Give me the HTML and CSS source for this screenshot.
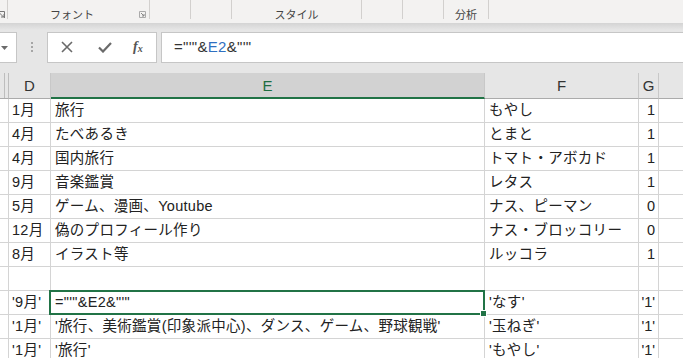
FILE: index.html
```html
<!DOCTYPE html>
<html lang="ja">
<head>
  <meta charset="UTF-8" />
  <title>Book1 - Excel</title>
  <link rel="stylesheet" href="styles.css">
</head>
<body>
  <!-- Ribbon group labels -->
  <div class="ribbon">
    <div class="group g-edge">
      <svg class="launcher edge" width="7" height="7" viewBox="0 0 7 7"><path d="M0 0.5h6.5v6.5M1.5 2l4 4M3 6h3V3" fill="none" stroke="#777" stroke-width="1"/></svg>
    </div>
    <div class="group g-font">
      <span>フォント</span>
      <svg class="launcher" width="7" height="7" viewBox="0 0 7 7"><path d="M0.5 6.5V0.5h6v6z" fill="none" stroke="#aaa" stroke-width="1"/><path d="M2 2l3 3M5 3v2H3" fill="none" stroke="#888" stroke-width="1"/></svg>
    </div>
    <div class="group w41"></div>
    <div class="group w41"></div>
    <div class="group g-style"><span>スタイル</span></div>
    <div class="group w41"></div>
    <div class="group w41"></div>
    <div class="group g-anal"><span>分析</span></div>
    <div class="group g-rest"></div>
  </div>
  <div class="ribbon-shadow"></div>

  <!-- Formula bar -->
  <div class="formula-bar">
    <div class="name-box">
      <svg width="7" height="4" viewBox="0 0 7 4"><path d="M0 0h7L3.5 4z" fill="#6b6b6b"/></svg>
    </div>
    <div class="grip"><i></i><i></i><i></i></div>
    <div class="fx-buttons">
      <svg width="12" height="12" viewBox="0 0 12 12"><path d="M1 1l10 10M11 1L1 11" stroke="#6a6a6a" stroke-width="1.6" fill="none"/></svg>
      <svg width="14" height="12" viewBox="0 0 14 12"><path d="M1 6.5l4 4L13 2" stroke="#6a6a6a" stroke-width="2.2" fill="none"/></svg>
      <span class="fx">f<sub>x</sub></span>
    </div>
    <div class="fx-input">="'"&amp;<span class="ref">E2</span>&amp;"'"</div>
  </div>

  <!-- Sheet -->
  <div class="sheet">
    <div class="hdr corner"></div>
    <div class="hdr">D</div>
    <div class="hdr sel">E</div>
    <div class="hdr">F</div>
    <div class="hdr">G</div>
    <div class="hdr last"></div>

    <div class="c"></div><div class="c">1月</div><div class="c">旅行</div><div class="c">もやし</div><div class="c num">1</div><div class="c last"></div>
    <div class="c"></div><div class="c">4月</div><div class="c">たべあるき</div><div class="c">とまと</div><div class="c num">1</div><div class="c last"></div>
    <div class="c"></div><div class="c">4月</div><div class="c">国内旅行</div><div class="c">トマト・アボカド</div><div class="c num">1</div><div class="c last"></div>
    <div class="c"></div><div class="c">9月</div><div class="c">音楽鑑賞</div><div class="c">レタス</div><div class="c num">1</div><div class="c last"></div>
    <div class="c"></div><div class="c">5月</div><div class="c">ゲーム、漫画、Youtube</div><div class="c">ナス、ピーマン</div><div class="c num">0</div><div class="c last"></div>
    <div class="c"></div><div class="c">12月</div><div class="c">偽のプロフィール作り</div><div class="c">ナス・ブロッコリー</div><div class="c num">0</div><div class="c last"></div>
    <div class="c"></div><div class="c">8月</div><div class="c">イラスト等</div><div class="c">ルッコラ</div><div class="c num">1</div><div class="c last"></div>
    <div class="c"></div><div class="c"></div><div class="c"></div><div class="c"></div><div class="c"></div><div class="c last"></div>
    <div class="c"></div><div class="c">'9月'</div><div class="c active">="'"&amp;E2&amp;"'"</div><div class="c">'なす'</div><div class="c num">'1'</div><div class="c last"></div>
    <div class="c"></div><div class="c">'1月'</div><div class="c">'旅行、美術鑑賞(印象派中心)、ダンス、ゲーム、野球観戦'</div><div class="c">'玉ねぎ'</div><div class="c num">'1'</div><div class="c last"></div>
    <div class="c"></div><div class="c">'1月'</div><div class="c">'旅行'</div><div class="c">'もやし'</div><div class="c num">'1'</div><div class="c last"></div>
  </div>
</body>
</html>
```

FILE: styles.css
```css
* {
  margin: 0;
  padding: 0;
  box-sizing: border-box;
}
html, body {
  width: 683px;
  height: 358px;
  overflow: hidden;
}
body {
  background: #e6e6e6;
  font-family: "Liberation Sans", "Noto Sans CJK JP", sans-serif;
  color: #222;
}
/* Ribbon */
.ribbon {
  display: flex;
  height: 23px;
  background: #f3f2f1;
}
.group {
  position: relative;
  height: 19px;
  border-right: 1px solid #d2d0ce;
  display: flex;
  align-items: flex-end;
  justify-content: center;
  font-size: 11px;
  color: #444;
  line-height: 13px;
  flex-shrink: 0;
}
.group span {
  margin-bottom: -3px;
}
.g-edge { width: 8px; }
.g-font { width: 142px; padding-right: 13px; }
.w41 { width: 41px; }
.g-style { width: 130px; }
.g-anal { width: 45px; }
.g-rest { flex: 1; border-right: none; }
.launcher {
  position: absolute;
  right: 3px;
  bottom: 1px;
}
.launcher.edge {
  right: 2px;
  bottom: 1px;
}
.ribbon-shadow {
  height: 7px;
  background: linear-gradient(#d4d4d4, #e6e6e6);
}
/* Formula bar */
.formula-bar {
  display: flex;
  align-items: center;
  height: 43px;
  padding-bottom: 9px;
}
.name-box {
  width: 17px;
  height: 31px;
  background: #fff;
  border: 1px solid #c6c6c6;
  border-left: none;
  display: flex;
  align-items: center;
  padding-left: 1px;
  padding-top: 2px;
}
.grip {
  width: 30px;
  display: flex;
  flex-direction: column;
  align-items: center;
  gap: 2px;
}
.grip i {
  width: 2px;
  height: 2px;
  background: #a6a6a6;
}
.fx-buttons {
  width: 110px;
  height: 31px;
  background: #fff;
  border: 1px solid #c6c6c6;
  display: flex;
  align-items: center;
  padding-left: 13px;
}
.fx-buttons svg:first-child { margin-right: 25px; }
.fx-buttons svg:nth-child(2) { margin-right: 21px; }
.fx {
  font-family: "Liberation Serif", serif;
  font-style: italic;
  font-weight: bold;
  font-size: 14px;
  color: #555;
}
.fx sub {
  font-size: 10px;
  vertical-align: -1px;
}
.fx-input {
  flex: 1;
  margin-left: 4px;
  height: 31px;
  background: #fff;
  border: 1px solid #c6c6c6;
  border-right: none;
  padding-left: 12px;
  font-size: 15px;
  letter-spacing: 0.3px;
  line-height: 28px;
  color: #333;
}
.fx-input .ref { color: #2f6fc0; }
/* Sheet grid */
.sheet {
  display: grid;
  grid-template-columns: 9px 42px 434px 154px 20px 1fr;
  grid-template-rows: 26px;
  grid-auto-rows: 24px;
}
.hdr {
  background: #e6e6e6;
  border-right: 1px solid #c8c8c8;
  border-bottom: 1px solid #ababab;
  font-size: 15px;
  color: #333;
  text-align: center;
  line-height: 25px;
}
.hdr.corner {
  border-right: 1px solid #bdbdbd;
  box-shadow: inset -3px 0 0 #e6e6e6, inset -4px 0 0 #bdbdbd;
}
.hdr.sel {
  background: #d2d2d2;
  color: #1e6e42;
  border-bottom: 2px solid #217346;
}
.hdr.last { border-right: none; }
.c {
  position: relative;
  background: #fff;
  border-right: 1px solid #d4d4d4;
  border-bottom: 1px solid #d4d4d4;
  font-size: 14.5px;
  letter-spacing: 0.3px;
  line-height: 23px;
  padding-left: 3px;
  white-space: nowrap;
}
.c:nth-child(6n+3) { padding-left: 4px; }
.c:nth-child(6n+4) { padding-left: 4px; }
.c.num {
  text-align: right;
  padding-right: 3px;
  padding-left: 0;
  letter-spacing: 0;
}
.c.last { border-right: none; }
.c.active::after {
  content: "";
  position: absolute;
  left: -2px;
  top: -1px;
  right: -1px;
  bottom: -1px;
  border: 2px solid #217346;
}
.c.active::before {
  content: "";
  position: absolute;
  right: -3px;
  bottom: -3px;
  width: 5px;
  height: 5px;
  background: #217346;
  border: 1px solid #fff;
  z-index: 2;
}
```
